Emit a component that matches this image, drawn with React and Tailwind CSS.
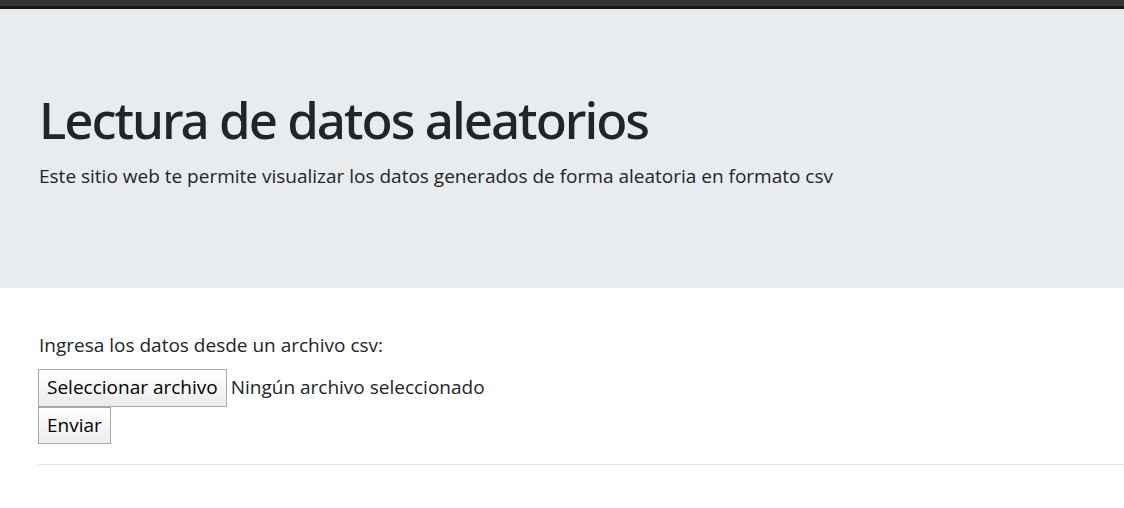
export default function App() {
  return (
    <div className="min-h-[508px] bg-white text-[#212529]" style={{ fontFamily: '"Open Sans", "Noto Sans", sans-serif' }}>
      <div className="h-[6px] bg-[#363636]" />
      <div className="h-[3px] bg-[#161616]" />

      <header className="h-[279px] bg-[#e9ecef] pl-[39px] pt-[80px]">
        <h1 className="text-[51px] leading-[1.2] font-medium tracking-[-2px]" style={{ fontFamily: '"Noto Sans", "Open Sans", sans-serif' }}>Lectura de datos aleatorios</h1>
        <p className="mt-[12px] text-[19px] leading-[1.5]">Este sitio web te permite visualizar los datos generados de forma aleatoria en formato csv</p>
      </header>

      <main className="pl-[38px] pt-[43px]">
        <p className="pl-px text-[19px] leading-[1.5]">Ingresa los datos desde un archivo csv:</p>
        <form className="mt-[9px]">
          <div className="flex items-center gap-[4px]">
            <button type="button" className="h-[38px] border border-[#a9a9a9] bg-gradient-to-b from-white to-[#ececec] px-[8px] text-[19px] leading-none text-black">
              Seleccionar archivo
            </button>
            <span className="text-[19px]">Ningún archivo seleccionado</span>
          </div>
          <button type="submit" className="h-[37px] border border-[#a9a9a9] bg-gradient-to-b from-white to-[#ececec] px-[8px] text-[19px] leading-none text-black">
            Enviar
          </button>
        </form>
        <hr className="mt-[20px] border-t border-[#e5e5e5]" />
      </main>
    </div>
  )
}
